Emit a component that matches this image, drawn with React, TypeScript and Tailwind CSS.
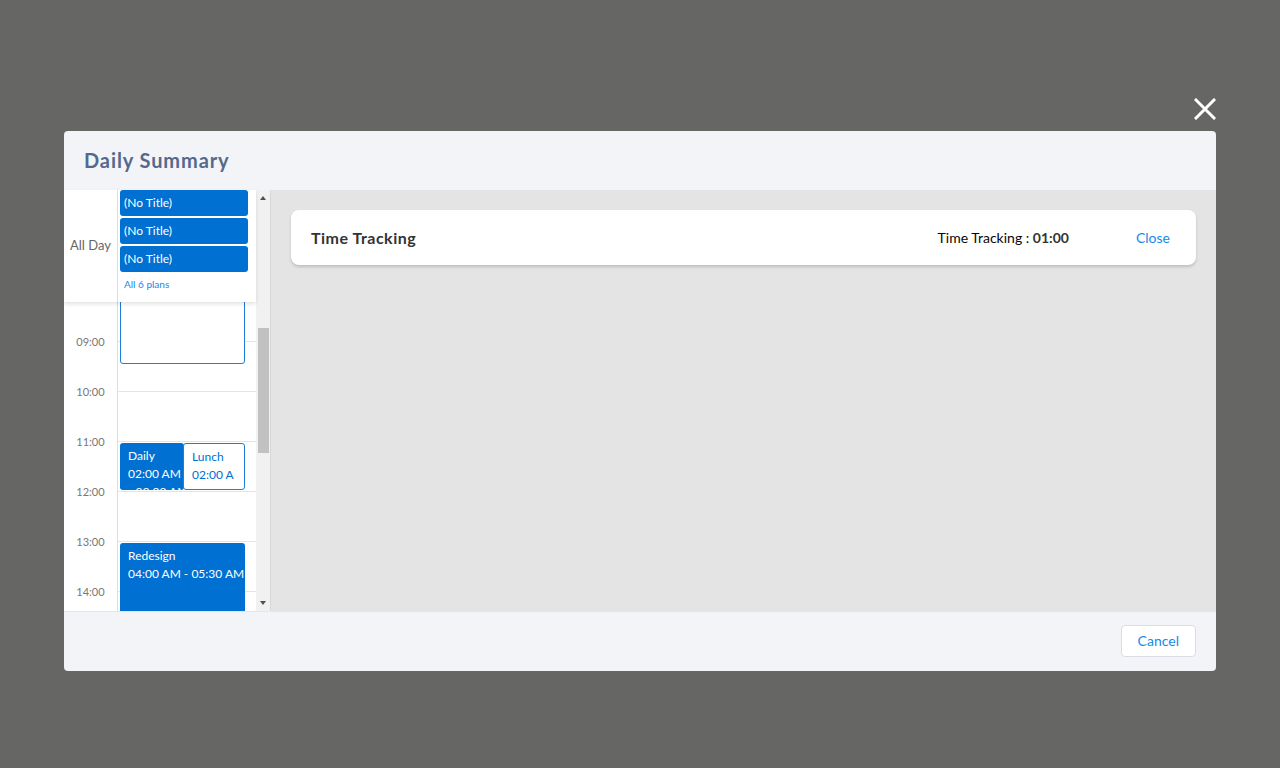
import React from 'react'

const hours = ['09:00', '10:00', '11:00', '12:00', '13:00', '14:00']

function CloseIcon() {
  return (
    <svg width="22" height="22" viewBox="0 0 22 22" fill="none">
      <path d="M2 2L20 20M20 2L2 20" stroke="white" strokeWidth="3" strokeLinecap="square" />
    </svg>
  )
}

function ScrollBar() {
  return (
    <div className="w-[14px] shrink-0 bg-[#f1f1f1] flex flex-col items-center">
      <div className="h-[16px] flex items-center justify-center">
        <div className="w-0 h-0 border-l-[3.5px] border-r-[3.5px] border-b-[4px] border-l-transparent border-r-transparent border-b-[#505050]" />
      </div>
      <div className="mt-[122px] w-[11px] h-[125px] bg-[#c1c1c1]" />
      <div className="flex-1" />
      <div className="h-[16px] flex items-center justify-center">
        <div className="w-0 h-0 border-l-[3.5px] border-r-[3.5px] border-t-[4px] border-l-transparent border-r-transparent border-t-[#505050]" />
      </div>
    </div>
  )
}

function AllDay() {
  return (
    <div className="relative z-10 h-[112px] flex bg-white shadow-[0_2px_4px_rgba(0,0,0,0.12)]">
      <div className="w-[54px] shrink-0 border-r border-[#dddddd] flex items-center justify-center text-[13px] text-[#666666]">
        All Day
      </div>
      <div className="flex-1 flex flex-col gap-[2px] pl-[2px] pr-[8px]">
        {[0, 1, 2].map((i) => (
          <div key={i} className="h-[26px] rounded-[3px] bg-[#0070d2] text-white text-[12px] leading-[26px] pl-[4px]">
            (No Title)
          </div>
        ))}
        <div className="pl-[4px] pt-[3px] text-[10px] text-[#1589ee]">All 6 plans</div>
      </div>
    </div>
  )
}

function Timeline() {
  return (
    <div className="relative flex-1 flex overflow-hidden">
      <div className="w-[54px] shrink-0 border-r border-[#dddddd] flex flex-col">
        <div className="h-[15px] shrink-0" />
        {hours.map((h) => (
          <div key={h} className="h-[50px] shrink-0 flex items-center justify-center text-[11px] text-[#777777]">
            {h}
          </div>
        ))}
      </div>
      <div className="relative flex-1 flex flex-col">
        <div className="h-[40px] shrink-0 border-b border-[#e4e4e4]" />
        {hours.map((h) => (
          <div key={h} className="h-[50px] shrink-0 border-b border-[#e4e4e4]" />
        ))}

        <div className="absolute left-[2px] w-[125px] top-[-6px] h-[68px] rounded-[3px] border border-[#1b7fd8] bg-white" />

        <div className="absolute left-[2px] w-[64px] top-[141px] h-[47px] rounded-[3px] bg-[#0070d2] overflow-hidden text-white text-[12px] leading-[18px] pl-[8px] pt-[4px] whitespace-nowrap">
          <div>Daily</div>
          <div>02:00 AM</div>
          <div>- 03:00 AM</div>
        </div>
        <div className="absolute left-[65px] w-[62px] top-[141px] h-[47px] rounded-[3px] border border-[#1b7fd8] bg-white text-[#0070d2] text-[12px] leading-[18px] pl-[8px] pr-[10px] pt-[4px] whitespace-nowrap">
          <div className="overflow-hidden">
            <div>Lunch</div>
            <div>02:00 AM</div>
          </div>
        </div>

        <div className="absolute left-[2px] w-[125px] top-[241px] h-[90px] rounded-[3px] bg-[#0070d2] overflow-hidden text-white text-[12px] leading-[18px] pl-[8px] pt-[4px] whitespace-nowrap">
          <div>Redesign</div>
          <div>04:00 AM - 05:30 AM</div>
        </div>
      </div>
    </div>
  )
}

export default function App() {
  return (
    <div
      className="w-[1280px] h-[768px] bg-[#666664] flex flex-col px-[64px] pt-[97px]"
      style={{ fontFamily: 'Lato, "Noto Sans", sans-serif' }}
    >
      <div className="h-[34px] flex justify-end">
        <div className="mt-[1px]">
          <CloseIcon />
        </div>
      </div>

      <div className="h-[540px] flex flex-col rounded-[4px] overflow-hidden">
        <div className="h-[59px] shrink-0 bg-[#f3f4f8] flex items-center px-[20px]">
          <h2 className="text-[20px] font-bold tracking-[0.9px] text-[#54698d] -mt-[1px]">Daily Summary</h2>
        </div>

        <div className="flex-1 flex min-h-0">
          <div className="w-[207px] shrink-0 flex border-r border-[#d8d8d8] bg-white">
            <div className="w-[192px] flex flex-col">
              <AllDay />
              <Timeline />
            </div>
            <ScrollBar />
          </div>

          <div className="flex-1 bg-[#e4e4e4] p-[20px]">
            <div className="h-[55px] bg-white rounded-[8px] shadow-[0_2px_3px_rgba(0,0,0,0.16)] flex items-center pl-[20px] pr-[20px]">
              <div className="flex-1 text-[16px] font-bold tracking-[0.5px] text-[#333333]">Time Tracking</div>
              <div className="text-[14px] text-[#080707]">
                Time Tracking : <span className="font-bold text-[#333333]">01:00</span>
              </div>
              <div className="ml-[67px] mr-[6px] text-[14px] text-[#1589ee]">Close</div>
            </div>
          </div>
        </div>

        <div className="h-[60px] shrink-0 bg-[#f3f4f8] border-t border-[#e6e6e6] flex items-center justify-end px-[20px]">
          <button className="h-[32px] -mt-[2px] px-[16px] bg-white border border-[#d8dde6] rounded-[4px] text-[14px] text-[#1589ee]">
            Cancel
          </button>
        </div>
      </div>
    </div>
  )
}
